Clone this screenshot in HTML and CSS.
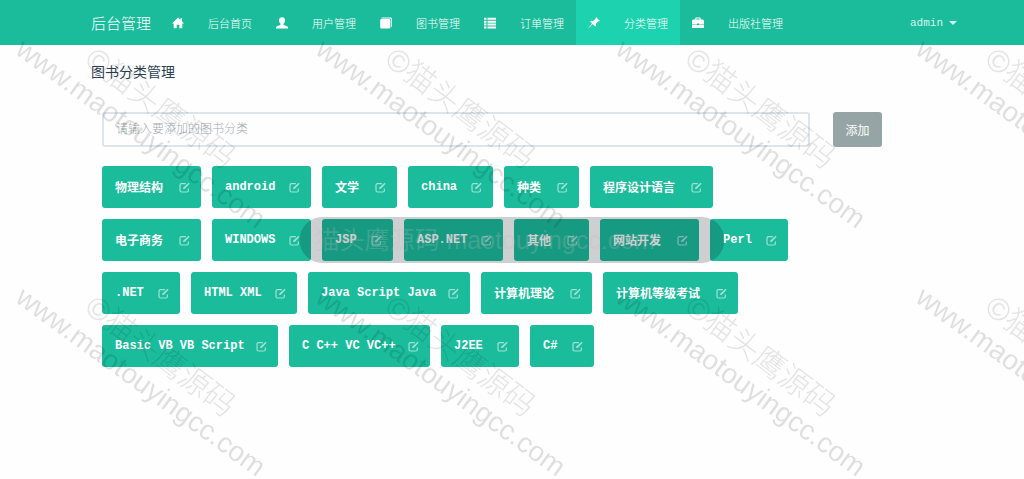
FILE: index.html
```html
<!DOCTYPE html>
<html lang="zh-CN">
<head>
    <meta charset="UTF-8">
    <meta name="viewport" content="width=device-width, initial-scale=1.0">
    <title>图书分类管理</title>
    <link rel="stylesheet" href="styles.css">
</head>
<body>
    <!-- Shared icons -->
    <svg class="sprite" aria-hidden="true">
        <symbol id="icon-home" viewBox="0 0 12 12">
            <path d="M6 .5 0 6.4h1.7v4.900h3V7.800h2.600v3.500h3V6.400H12L9.900 4.300V1.200H8.400v1.700z"/>
        </symbol>
        <symbol id="icon-user" viewBox="0 0 12 12">
            <path d="M6 .3C4.200.3 3 1.600 3 3.300c0 1.400.6 2.700 1.500 3.400v.7c0 .4-.3.7-.8.9L1 9.300c-.6.3-1 .8-1 1.400v.8h12v-.8c0-.6-.4-1.100-1-1.400L8.300 8.300c-.5-.2-.8-.5-.8-.9v-.7C8.400 6 9 4.700 9 3.300 9 1.600 7.800.3 6 .3z"/>
        </symbol>
        <symbol id="icon-book" viewBox="0 0 12 12">
            <path d="M2.200.4h8.200c.9 0 1.500.6 1.500 1.500v7.200c0 .6-.3 1-.8 1.200V2.600c0-.7-.5-1.200-1.200-1.200H1.200c.2-.6.5-1 1-1z"/>
            <rect x="0.200" y="2" width="10.200" height="9.500" rx="1"/>
        </symbol>
        <symbol id="icon-list" viewBox="0 0 12 12">
            <path d="M0 .8h2.500v2H0zM3.500.8H12v2H3.500zM0 3.700h2.500v2H0zM3.500 3.700H12v2H3.500zM0 6.600h2.500v2H0zM3.500 6.600H12v2H3.500zM0 9.500h2.500v2H0zM3.500 9.500H12v2H3.500z"/>
        </symbol>
        <symbol id="icon-pin" viewBox="0 0 12 12">
            <path d="M8.300.2 11.800 3.700l-.7.7-.8-.2-2.500 2.500.2 2-.8.8-2.500-2.400L.3 11.400l-.1-.1L4 6.500 2.100 4.500l.8-.8 2.300.3 2.600-2.500-.2-.7z"/>
        </symbol>
        <symbol id="icon-case" viewBox="0 0 12 12">
            <path d="M4.300.6h3.400c.6 0 1 .4 1 1v1h1.800c.9 0 1.500.6 1.500 1.500v2.900H7v-.5H5V7H0V4.100c0-.9.600-1.500 1.500-1.500h1.800v-1c0-.6.4-1 1-1zm0 1v1h3.400v-1zM0 7.500h5V8h2v-.5h5v3.600H0z"/>
        </symbol>
        <symbol id="icon-edit" viewBox="0 0 12 12">
            <path d="M7.500 1.700H2.700c-.9 0-1.600.7-1.600 1.600v6c0 .9.7 1.600 1.600 1.600h5.900c.9 0 1.600-.7 1.600-1.600V7" fill="none" stroke="currentColor" stroke-width="1.300"/>
            <path d="M10.500.8 11.600 1.900 6.500 7.300 4.300 8l.8-2.200z"/>
        </symbol>
    </svg>

    <header class="navbar">
        <a class="brand" href="#">后台管理</a>
        <nav class="nav">
            <a class="nav-item" href="#"><svg class="icon"><use href="#icon-home"/></svg>后台首页</a>
            <a class="nav-item" href="#"><svg class="icon"><use href="#icon-user"/></svg>用户管理</a>
            <a class="nav-item" href="#"><svg class="icon"><use href="#icon-book"/></svg>图书管理</a>
            <a class="nav-item" href="#"><svg class="icon"><use href="#icon-list"/></svg>订单管理</a>
            <a class="nav-item active" href="#"><svg class="icon"><use href="#icon-pin"/></svg>分类管理</a>
            <a class="nav-item" href="#"><svg class="icon"><use href="#icon-case"/></svg>出版社管理</a>
        </nav>
        <button class="account" type="button">admin<span class="caret"></span></button>
    </header>

    <main class="page">
        <h1 class="title">图书分类管理</h1>
        <form class="panel">
            <input class="field" type="text" aria-label="图书分类" placeholder="请输入要添加的图书分类">
            <button class="add" type="button">添加</button>
            <!-- --chars is the number of letters in a latin name -->
            <div class="tags">
                <button class="tag" type="button">物理结构<svg class="edit"><use href="#icon-edit"/></svg></button>
                <button class="tag" type="button"><span class="latin" style="--chars: 7">android</span><svg class="edit"><use href="#icon-edit"/></svg></button>
                <button class="tag" type="button">文学<svg class="edit"><use href="#icon-edit"/></svg></button>
                <button class="tag" type="button"><span class="latin" style="--chars: 5">china</span><svg class="edit"><use href="#icon-edit"/></svg></button>
                <button class="tag" type="button">种类<svg class="edit"><use href="#icon-edit"/></svg></button>
                <button class="tag" type="button">程序设计语言<svg class="edit"><use href="#icon-edit"/></svg></button>
                <button class="tag" type="button">电子商务<svg class="edit"><use href="#icon-edit"/></svg></button>
                <button class="tag" type="button"><span class="latin" style="--chars: 7">WINDOWS</span><svg class="edit"><use href="#icon-edit"/></svg></button>
                <button class="tag" type="button"><span class="latin" style="--chars: 3">JSP</span><svg class="edit"><use href="#icon-edit"/></svg></button>
                <button class="tag" type="button"><span class="latin" style="--chars: 7">ASP.NET</span><svg class="edit"><use href="#icon-edit"/></svg></button>
                <button class="tag" type="button">其他<svg class="edit"><use href="#icon-edit"/></svg></button>
                <button class="tag" type="button">网站开发<svg class="edit"><use href="#icon-edit"/></svg></button>
                <button class="tag" type="button"><span class="latin" style="--chars: 4">Perl</span><svg class="edit"><use href="#icon-edit"/></svg></button>
                <button class="tag" type="button"><span class="latin" style="--chars: 4">.NET</span><svg class="edit"><use href="#icon-edit"/></svg></button>
                <button class="tag" type="button"><span class="latin" style="--chars: 8">HTML XML</span><svg class="edit"><use href="#icon-edit"/></svg></button>
                <button class="tag" type="button"><span class="latin" style="--chars: 16">Java Script Java</span><svg class="edit"><use href="#icon-edit"/></svg></button>
                <button class="tag" type="button">计算机理论<svg class="edit"><use href="#icon-edit"/></svg></button>
                <button class="tag" type="button">计算机等级考试<svg class="edit"><use href="#icon-edit"/></svg></button>
                <button class="tag" type="button"><span class="latin" style="--chars: 18">Basic VB VB Script</span><svg class="edit"><use href="#icon-edit"/></svg></button>
                <button class="tag" type="button"><span class="latin" style="--chars: 13">C C++ VC VC++</span><svg class="edit"><use href="#icon-edit"/></svg></button>
                <button class="tag" type="button"><span class="latin" style="--chars: 4">J2EE</span><svg class="edit"><use href="#icon-edit"/></svg></button>
                <button class="tag" type="button"><span class="latin" style="--chars: 2">C#</span><svg class="edit"><use href="#icon-edit"/></svg></button>
            </div>
        </form>
    </main>

    <!-- Repeating watermark -->
    <svg class="watermark" aria-hidden="true">
        <defs>
            <pattern id="mark" y="30" width="300" height="248" patternUnits="userSpaceOnUse">
                <text class="mark-url" transform="translate(14 23) rotate(36)">www.maotouyingcc.com</text>
                <text class="mark-name" transform="translate(83 33) rotate(37)">©猫头鹰源码</text>
            </pattern>
        </defs>
        <rect width="100%" height="100%" fill="url(#mark)"/>
    </svg>
    <div class="stamp">猫头鹰源码 maotouyingcc.com</div>
</body>
</html>
```
FILE: styles.css
```css
* {
    margin: 0;
    padding: 0;
    box-sizing: border-box;
}

body {
    position: relative;
    min-height: 100vh;
    overflow: hidden;
    background: #fefefe;
    color: #2c3e50;
    font-family: "Liberation Mono", "Noto Sans CJK SC", monospace;
    font-size: 12px;
}

a {
    color: inherit;
    text-decoration: none;
}

button, input {
    border: none;
    font: inherit;
}

button {
    cursor: pointer;
}

.sprite {
    display: none;
}

/* Top bar */
.navbar {
    display: flex;
    height: 45px;
    padding: 0 56px 0 91px;
    background: #1abc9c;
    color: white;
    font-weight: 300;
}

.brand {
    display: flex;
    align-items: center;
    padding-right: 9px;
    font-size: 15px;
}

.nav {
    display: flex;
    flex: 1;
}

.nav-item {
    display: flex;
    align-items: center;
    gap: 24px;
    min-width: 104px;
    padding: 0 12px;
    font-size: 11px;
}

.nav-item.active {
    background: #1dd2af;
}

.icon {
    width: 12px;
    height: 12px;
    fill: currentColor;
}

.account {
    display: flex;
    align-items: center;
    gap: 6px;
    padding: 0 11px;
    background: none;
    color: #d6f5ee;
    font-size: 11px;
}

.caret {
    border: 4px solid transparent;
    border-top-color: currentColor;
    border-bottom: none;
}

/* Category page */
.page {
    padding: 17px 142px 0 91px;
}

.title {
    font-size: 14px;
    font-weight: 400;
    line-height: 22px;
}

.panel {
    display: grid;
    grid-template-columns: minmax(0, 1fr) 49px;
    column-gap: 23px;
    row-gap: 19px;
    padding: 28px 0 0 11px;
}

.field {
    height: 35px;
    padding: 0 12px;
    border: 2px solid #dce4ec;
    border-radius: 3px;
    background: transparent;
    color: #2c3e50;
}

.field::placeholder {
    color: #a3adb3;
    font-weight: 300;
}

.add {
    border-radius: 3px;
    background: #95a5a6;
    color: white;
}

.tags {
    display: flex;
    flex-wrap: wrap;
    gap: 11px;
}

.tag {
    display: flex;
    align-items: center;
    gap: 16px;
    height: 42px;
    padding: 0 11px 0 13px;
    border-radius: 3px;
    background: #1abc9c;
    color: white;
    font-weight: 700;
    white-space: nowrap;
}

.latin {
    width: calc(var(--chars) * 7px - 1px);
    text-align: left;
}

.edit {
    width: 11px;
    height: 11px;
    color: #a0e2d4;
    fill: currentColor;
}

/* Overlays */
.watermark {
    position: absolute;
    inset: 0;
    width: 100%;
    height: 100%;
    pointer-events: none;
}

.mark-url {
    fill: rgba(0, 0, 0, 0.12);
    font-family: "Liberation Sans", sans-serif;
    font-size: 28px;
}

.mark-name {
    fill: rgba(0, 0, 0, 0.1);
    font-family: "Liberation Sans", "Noto Sans CJK SC", sans-serif;
    font-size: 31px;
    font-weight: 200;
}

.stamp {
    position: absolute;
    top: 217px;
    left: 50%;
    width: 425px;
    height: 46px;
    padding-left: 15px;
    border-radius: 23px;
    background: rgba(15, 22, 32, 0.2);
    color: rgba(190, 190, 190, 0.25);
    font: 25px/46px "Liberation Sans", "Noto Sans CJK SC", sans-serif;
    white-space: nowrap;
    transform: translateX(-50%);
    pointer-events: none;
}
```
